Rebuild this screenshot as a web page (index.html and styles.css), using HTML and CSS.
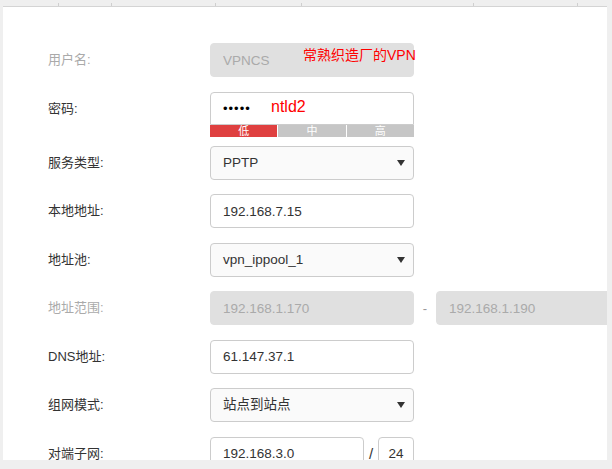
FILE: index.html
```html
<!DOCTYPE html>
<html lang="zh-CN">
<head>
    <meta charset="UTF-8">
    <meta name="viewport" content="width=device-width, initial-scale=1.0">
    <title>VPN 设置</title>
    <link rel="stylesheet" href="styles.css">
</head>
<body>
    <div class="ticks">
        <span style="width:56px"></span>
        <span style="width:53px"></span>
        <span style="width:104px"></span>
        <span style="width:86px"></span>
        <span style="width:172px"></span>
        <span style="width:104px"></span>
    </div>
    <div class="panel">
        <form class="vpn-form">
            <div class="row">
                <label class="label disabled">用户名:</label>
                <div class="field">
                    <input class="box" type="text" value="VPNCS" disabled>
                    <span class="note note-user">常熟织造厂的VPN</span>
                </div>
            </div>

            <div class="row row-pass">
                <label class="label">密码:</label>
                <div class="field pass-field">
                    <input class="box pass" type="password" value="12345">
                    <span class="note note-pass">ntld2</span>
                    <div class="strength">
                        <span class="low">低</span>
                        <span>中</span>
                        <span>高</span>
                    </div>
                </div>
            </div>

            <div class="row">
                <label class="label">服务类型:</label>
                <div class="field">
                    <div class="box select">PPTP<i class="arrow"></i></div>
                </div>
            </div>

            <div class="row">
                <label class="label">本地地址:</label>
                <div class="field">
                    <input class="box" type="text" value="192.168.7.15">
                </div>
            </div>

            <div class="row">
                <label class="label">地址池:</label>
                <div class="field">
                    <div class="box select">vpn_ippool_1<i class="arrow"></i></div>
                </div>
            </div>

            <div class="row">
                <label class="label disabled">地址范围:</label>
                <div class="field range">
                    <input class="box" type="text" value="192.168.1.170" disabled>
                    <span class="sep">-</span>
                    <input class="box" type="text" value="192.168.1.190" disabled>
                </div>
            </div>

            <div class="row">
                <label class="label">DNS地址:</label>
                <div class="field">
                    <input class="box" type="text" value="61.147.37.1">
                </div>
            </div>

            <div class="row">
                <label class="label">组网模式:</label>
                <div class="field">
                    <div class="box select">站点到站点<i class="arrow"></i></div>
                </div>
            </div>

            <div class="row">
                <label class="label">对端子网:</label>
                <div class="field subnet">
                    <input class="box net" type="text" value="192.168.3.0">
                    <span class="slash">/</span>
                    <input class="box mask" type="text" value="24">
                </div>
            </div>
        </form>
    </div>
</body>
</html>
```

FILE: styles.css
```css
* {
    box-sizing: border-box;
}
body {
    margin: 0;
    padding-top: 3px;
    background-color: #efefef;
    font-family: "Liberation Sans", "Noto Sans CJK SC", sans-serif;
    color: #333;
    height: 469px;
    overflow: hidden;
}
.ticks {
    display: flex;
    margin-left: 3px;
    height: 3px;
}
.ticks span {
    border-right: 1px solid #cfcfcf;
}
.panel {
    margin-left: 3px;
    width: 604px;
    height: 454px;
    background: #fff;
    border-top: 1px solid #d4d4d4;
    overflow: hidden;
}
.vpn-form {
    padding: 36px 0 0 45px;
}
.row {
    display: flex;
    align-items: flex-start;
    margin-bottom: 14.5px;
}
.row-pass {
    margin-bottom: 9px;
}
.label {
    flex-shrink: 0;
    width: 162px;
    height: 34px;
    line-height: 34px;
    font-size: 13px;
    color: #333;
}
.label.disabled {
    color: #aaa;
}
.field {
    position: relative;
    display: flex;
    align-items: center;
    flex-shrink: 0;
}
.pass-field {
    flex-direction: column;
    align-items: stretch;
}
.box {
    flex-shrink: 0;
    width: 204px;
    height: 34px;
    padding: 0 12px;
    border: 1px solid #ccc;
    border-radius: 4px;
    background: #fff;
    font-family: inherit;
    font-size: 13.5px;
    color: #333;
    outline: none;
}
.box:disabled {
    background: #e0e0e0;
    border-color: #e0e0e0;
    color: #aaa;
}
.pass {
    height: 33px;
    border-bottom-left-radius: 0;
    border-bottom-right-radius: 0;
    font-size: 13px;
    letter-spacing: 1px;
    color: #000;
}
.select {
    display: flex;
    align-items: center;
    justify-content: space-between;
    padding-right: 8px;
    background: #fafafa;
    line-height: 32px;
}
.arrow {
    width: 0;
    height: 0;
    border-left: 4px solid transparent;
    border-right: 4px solid transparent;
    border-top: 6px solid #333;
}
.strength {
    display: flex;
    gap: 1px;
    width: 204px;
}
.strength span {
    flex: 1;
    height: 12px;
    line-height: 12px;
    font-size: 11px;
    text-align: center;
    color: #fff;
    background: #c6c6c6;
}
.strength .low {
    background: #df4040;
}
.range .sep {
    width: 22px;
    text-align: center;
    color: #999;
    font-size: 13px;
}
.subnet .net {
    width: 154px;
}
.subnet .slash {
    width: 14px;
    text-align: center;
    font-size: 15px;
}
.subnet .mask {
    width: 36px;
    padding: 0;
    text-align: center;
}

/* red hand-written notes over the fields */
.note {
    position: absolute;
    color: #f00;
    white-space: nowrap;
}
.note-user {
    left: 93px;
    top: 1px;
    font-size: 14px;
}
.note-pass {
    left: 61px;
    top: 6px;
    font-size: 16px;
}
```
